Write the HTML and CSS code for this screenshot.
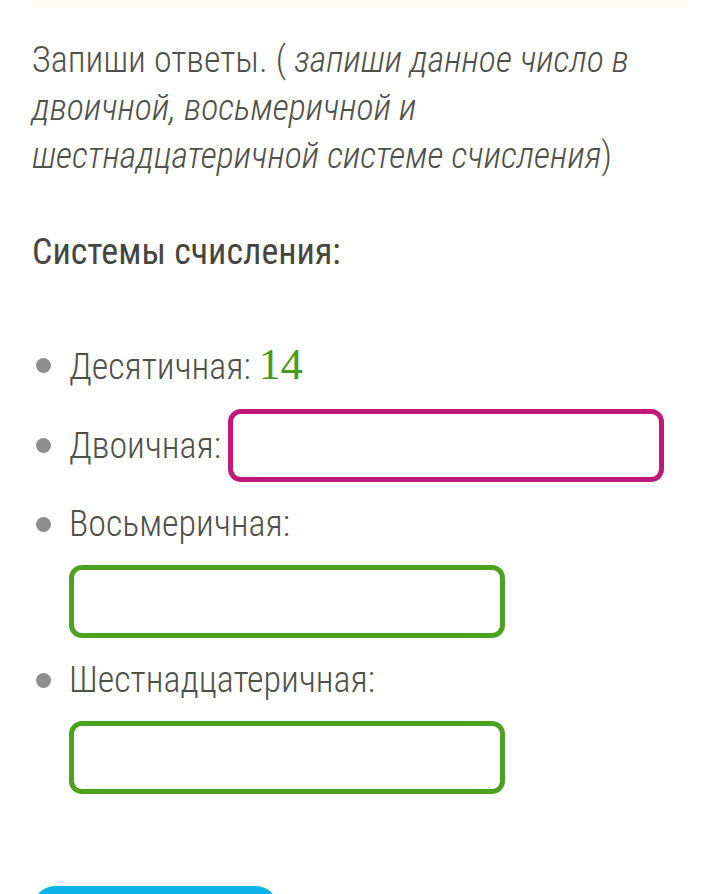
FILE: index.html
```html
<!DOCTYPE html>
<html lang="ru">
<head>
<meta charset="utf-8">
<link rel="stylesheet" href="styles.css">
</head>
<body>
<div class="topbar"></div>
<main class="task">
  <p class="intro">Запиши ответы. ( <em>запиши данное число в двоичной, восьмеричной и шестнадцатеричной системе счисления</em>)</p>
  <h2 class="heading">Системы счисления:</h2>
  <ul class="systems">
    <li class="item">
      <span class="dot"></span>
      <div class="row">
        <span class="label">Десятичная: <span class="num">14</span></span>
      </div>
    </li>
    <li class="item item--boxed">
      <span class="dot"></span>
      <div class="row">
        <span class="label">Двоичная:</span>
        <span class="answer answer--pink"></span>
      </div>
    </li>
    <li class="item">
      <span class="dot"></span>
      <div class="row">
        <span class="label">Восьмеричная:</span>
        <span class="answer answer--green"></span>
      </div>
    </li>
    <li class="item">
      <span class="dot"></span>
      <div class="row">
        <span class="label">Шестнадцатеричная:</span>
        <span class="answer answer--green"></span>
      </div>
    </li>
  </ul>
  <div class="actions">
    <button class="check" type="button"></button>
  </div>
</main>
</body>
</html>
```
FILE: styles.css
```css
html, body {
  margin: 0;
  padding: 0;
  background: #ffffff;
}
body {
  font-family: Roboto, "Noto Sans", sans-serif;
  font-weight: 300;
  font-stretch: 75%;
  color: #50504b;
  overflow: hidden;
}
.topbar {
  height: 7px;
  margin: 0 32px;
  background: #fcfcf1;
}
.task {
  padding: 29px 32px 0;
}
.intro {
  margin: 0;
  max-width: 630px;
  font-size: 36px;
  line-height: 48px;
}
.intro em {
  font-style: italic;
}
.heading {
  margin: 48px 0 0;
  font-size: 36px;
  line-height: 48px;
  font-weight: 400;
  color: #46463f;
}
.systems {
  list-style: none;
  margin: 65px 0 0;
  padding: 0;
  display: flex;
  flex-direction: column;
  gap: 18px;
}
.item {
  display: grid;
  grid-template-columns: 37px 1fr;
  align-items: start;
}
.dot {
  width: 15px;
  height: 15px;
  margin: 17px 0 0 4px;
  border-radius: 50%;
  background: #8e8e8e;
}
.item--boxed .dot {
  margin-top: 29px;
}
.row {
  display: flex;
  flex-wrap: wrap;
  align-items: center;
  column-gap: 7px;
  row-gap: 17px;
}
.label {
  font-size: 36px;
  line-height: 48px;
  white-space: nowrap;
}
.num {
  font-family: "Liberation Serif", serif;
  font-stretch: normal;
  font-weight: 400;
  font-size: 44px;
  color: #479a1c;
}
.answer {
  display: block;
  box-sizing: border-box;
  width: 436px;
  height: 73px;
  border: 5px solid;
  border-radius: 13px;
  background: #fff;
}
.answer--pink {
  border-color: #c0187a;
}
.answer--green {
  border-color: #4ca21e;
}
.actions {
  margin-top: 92px;
}
.check {
  display: block;
  width: 245px;
  height: 60px;
  margin-left: 1px;
  border: 0;
  border-radius: 22px;
  background: #0ab3ea;
}
```
